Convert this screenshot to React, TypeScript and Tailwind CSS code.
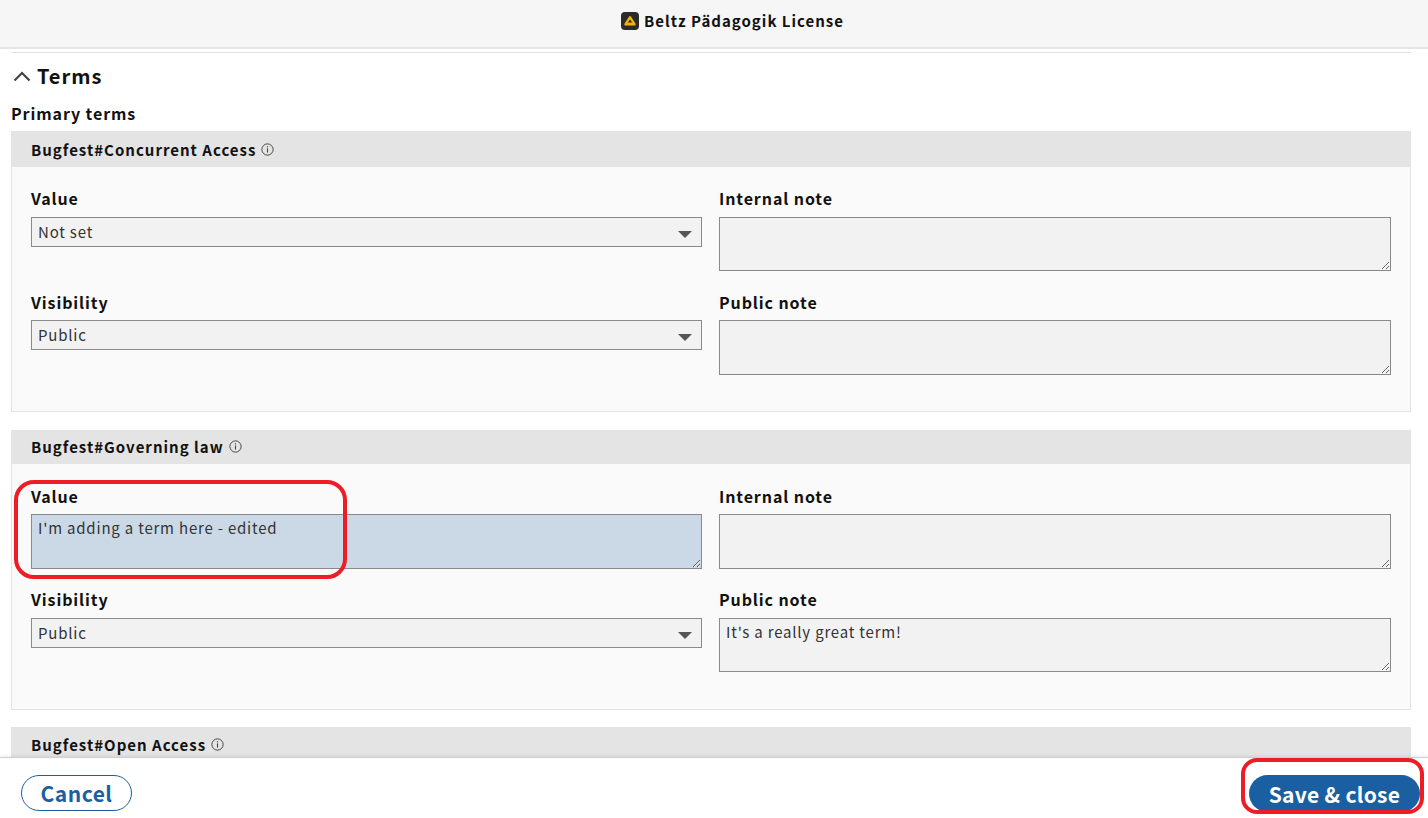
type Term = {
  name: string;
  headerHeight: string;
  value: string | null;
  valueHeight: string;
  internalHeight: string;
  publicHeight: string;
  publicNote: string;
  bodyPadding: string;
  cardMargin: string;
  firstLabelGap: string;
  secondLabelGap: string;
  rowGap: string;
  highlight?: boolean;
};

const TERMS: Term[] = [
  {
    name: "Bugfest#Concurrent Access",
    headerHeight: "h-[35px] pt-[2px]",
    value: null,
    valueHeight: "h-[30px]",
    internalHeight: "h-[54px]",
    publicHeight: "h-[55px]",
    publicNote: "",
    bodyPadding: "pt-[21px] pb-[36px]",
    cardMargin: "mb-[18px]",
    firstLabelGap: "mb-[9px]",
    secondLabelGap: "mb-[8px]",
    rowGap: "gap-y-[21px]",
  },
  {
    name: "Bugfest#Governing law",
    headerHeight: "h-[33px]",
    value: "I'm adding a term here - edited",
    valueHeight: "h-[55px]",
    internalHeight: "h-[55px]",
    publicHeight: "h-[54px]",
    publicNote: "It's a really great term!",
    bodyPadding: "pt-[22px] pb-[37px]",
    cardMargin: "mb-[17px]",
    firstLabelGap: "mb-[8px]",
    secondLabelGap: "mb-[9px]",
    rowGap: "gap-y-[20px]",
    highlight: true,
  },
];

const InfoIcon = () => (
  <svg width="13" height="13" viewBox="0 0 12 12" fill="none" className="ml-[5px] -mt-[3px] shrink-0 text-[#444]">
    <circle cx="6" cy="6" r="5.2" stroke="currentColor" strokeWidth="0.9" />
    <rect x="5.5" y="5" width="1" height="3.8" fill="currentColor" />
    <rect x="5.5" y="3" width="1" height="1.1" fill="currentColor" />
  </svg>
);

const Label = ({ children, gap }: { children: string; gap: string }) => (
  <div className={`h-[20px] ${gap} text-[16px] leading-[20px] font-bold tracking-[0.9px] text-[#111]`}>{children}</div>
);

const SelectBox = ({ value }: { value: string }) => (
  <div className="relative h-[30px] border border-[#8a8a8a] bg-[#f2f2f2] pl-[6px] text-[15px] leading-[28px] tracking-[0.8px] text-[#333]">
    {value}
    <svg width="14" height="7" viewBox="0 0 14 7" className="absolute right-[9px] top-[13px]">
      <path d="M0 0h14L7 7z" fill="#555" />
    </svg>
  </div>
);

const Area = ({ value, height, tint }: { value: string; height: string; tint?: boolean }) => (
  <textarea
    readOnly
    value={value}
    className={`block w-full ${height} border border-[#8a8a8a] px-[6px] py-[1px] text-[15px] leading-[24px] tracking-[0.8px] text-[#333] outline-none ${tint ? "bg-[#cbd9e7]" : "bg-[#f2f2f2]"}`}
  />
);

const TermCard = ({ term }: { term: Term }) => (
  <div className={`${term.cardMargin} border border-[#e3e3e3] bg-[#fafafa]`}>
    <div className={`flex items-center ${term.headerHeight} bg-[#e4e4e4] pl-[19px] text-[15px] font-bold tracking-[1px] text-[#111]`}>
      {term.name}
      <InfoIcon />
    </div>
    <div className={`grid grid-cols-[671px_672px] gap-x-[17px] ${term.rowGap} pl-[19px] ${term.bodyPadding}`}>
      <div>
        <Label gap={term.firstLabelGap}>Value</Label>
        {term.value === null ? (
          <SelectBox value="Not set" />
        ) : (
          <Area value={term.value} height={term.valueHeight} tint={term.highlight} />
        )}
      </div>
      <div>
        <Label gap={term.firstLabelGap}>Internal note</Label>
        <Area value="" height={term.internalHeight} />
      </div>
      <div>
        <Label gap={term.secondLabelGap}>Visibility</Label>
        <SelectBox value="Public" />
      </div>
      <div>
        <Label gap={term.secondLabelGap}>Public note</Label>
        <Area value={term.publicNote} height={term.publicHeight} />
      </div>
    </div>
  </div>
);

export default function App() {
  return (
    <div className="relative flex h-[818px] w-[1428px] flex-col overflow-hidden bg-white font-['Noto_Sans_CJK_JP','Noto_Sans',sans-serif]">
      <header className="flex h-[49px] shrink-0 items-center justify-center gap-[5px] border-b-2 border-[#e6e6e6] bg-[#f6f6f6] pb-[5px] pl-[37px] text-[15px] font-bold tracking-[1px] text-[#111]">
        <svg width="18" height="18" viewBox="0 0 18 18">
          <rect width="18" height="18" rx="4" fill="#2b2b2b" />
          <path d="M9 5.2 13.6 12.4H4.4Z" fill="none" stroke="#f2b300" strokeWidth="2.2" strokeLinejoin="round" />
          <rect x="4" y="10.5" width="10" height="2.6" rx="1" fill="#f2b300" />
        </svg>
        Beltz Pädagogik License
      </header>

      <main className="min-h-0 flex-1 overflow-hidden pl-[11px] pr-[17px] pt-[3px]">
        <div className="h-[1px] bg-[#e2e2e2]" />
        <div className="mt-[9px] flex h-[28px] items-center text-[20px] font-bold tracking-[1px] text-[#111]">
          <svg width="18" height="12" viewBox="0 0 18 12" fill="none" className="ml-[2px] mr-[6px] -mt-[1px] text-[#444]">
            <path d="M1.5 10.5 9 3l7.5 7.5" stroke="currentColor" strokeWidth="2.2" />
          </svg>
          Terms
        </div>
        <div className="mt-[13px] mb-[7px] h-[21px] text-[16px] leading-[21px] font-bold tracking-[0.9px] text-[#111]">
          Primary terms
        </div>
        {TERMS.map((term) => (
          <TermCard key={term.name} term={term} />
        ))}
        <div className="border border-[#e3e3e3] bg-[#e4e4e4]">
          <div className="flex h-[35px] items-center pl-[19px] text-[15px] font-bold tracking-[1px] text-[#111]">
            Bugfest#Open Access
            <InfoIcon />
          </div>
        </div>
      </main>

      <footer className="relative flex h-[61px] shrink-0 items-start justify-between border-t border-[#cfcfcf] bg-white pl-[21px] pr-[8px] pt-[17px] shadow-[0_-1px_3px_rgba(0,0,0,0.08)]">
        <button className="h-[36px] w-[111px] rounded-full border border-[#1b5fa3] bg-white text-[21px] leading-[32px] font-bold tracking-[0.5px] text-[#1b5fa3]">
          Cancel
        </button>
        <button className="h-[37px] w-[171px] rounded-full bg-[#1b5fa3] text-[21px] leading-[34px] font-bold tracking-[0.3px] text-white">
          Save &amp; close
        </button>
      </footer>

      {/* annotations drawn over the screenshot */}
      <div className="absolute left-[14px] top-[480px] h-[99px] w-[333px] rounded-[20px] border-[4px] border-[#ee1c25]" />
      <div className="absolute left-[1241px] top-[758px] h-[56px] w-[183px] rounded-[16px] border-[4px] border-[#ee1c25]" />
    </div>
  );
}
